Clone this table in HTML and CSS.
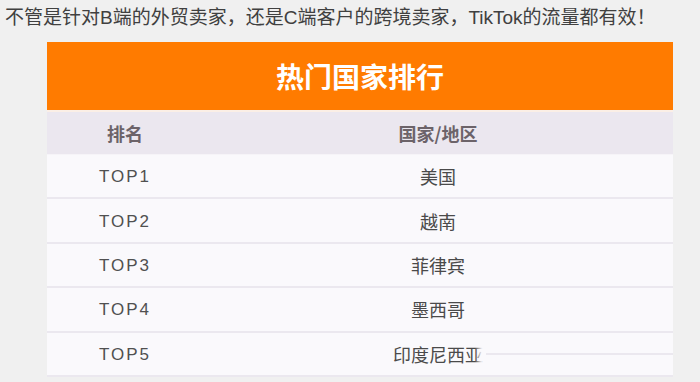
FILE: index.html
```html
<!DOCTYPE html>
<html lang="zh-CN">
<head>
<meta charset="utf-8">
<title>热门国家排行</title>
<link rel="stylesheet" href="styles.css">
</head>
<body>
<p class="intro">不管是针对B端的外贸卖家，还是C端客户的跨境卖家，TikTok的流量都有效！</p>
<div class="ranking">
  <div class="ranking-title">热门国家排行</div>
  <div class="row head"><div class="cell">排名</div><div class="cell">国家/地区</div></div>
  <div class="row"><div class="cell rank">TOP1</div><div class="cell">美国</div></div>
  <div class="row"><div class="cell rank">TOP2</div><div class="cell">越南</div></div>
  <div class="row"><div class="cell rank">TOP3</div><div class="cell">菲律宾</div></div>
  <div class="row"><div class="cell rank">TOP4</div><div class="cell">墨西哥</div></div>
  <div class="row last"><div class="cell rank">TOP5</div><div class="cell">印度尼西亚</div><span class="smudge"></span><span class="streak"></span></div>
</div>
</body>
</html>
```
FILE: styles.css
```css
html, body {
  margin: 0;
  padding: 0;
  background: #f0f0f0;
}
body {
  font-family: "Liberation Sans", "Noto Sans CJK SC", sans-serif;
  width: 700px;
  height: 382px;
  overflow: hidden;
}
.intro {
  margin: 0;
  padding: 6px 0 0 5px;
  height: 42px;
  box-sizing: border-box;
  font-size: 19px;
  line-height: 24px;
  color: #404040;
  white-space: nowrap;
}
.ranking {
  margin-left: 47px;
  width: 626px;
}
.ranking-title {
  height: 68px;
  background: #ff7b00;
  color: #ffffff;
  font-family: "Noto Sans CJK SC", sans-serif;
  font-weight: 700;
  font-size: 28px;
  display: flex;
  align-items: center;
  justify-content: center;
  border-bottom: 2px solid #fbefe6;
}
.row {
  position: relative;
  display: grid;
  grid-template-columns: 156px 1fr;
  height: 42.4px;
  background: #faf9fc;
  border-bottom: 2px solid #ebe8ef;
  color: #4a4a4a;
}
.row.head {
  height: 42px;
  background: #ebe7ef;
  border-bottom: 1px solid #f6f4f8;
  color: #6c6369;
  font-weight: 700;
}
.cell {
  display: flex;
  align-items: center;
  justify-content: center;
  font-family: "Noto Sans CJK SC", sans-serif;
  font-size: 18px;
}
.cell.rank {
  font-family: "Liberation Sans", sans-serif;
  font-size: 17px;
  letter-spacing: 2px;
  color: #505050;
  padding-top: 2px;
}
.smudge {
  position: absolute;
  left: 428px;
  top: 8px;
  width: 14px;
  height: 26px;
  background: linear-gradient(90deg, rgba(250,249,252,0) 0%, rgba(250,249,252,0.9) 45%, rgba(250,249,252,0.3) 100%);
}
.streak {
  position: absolute;
  left: 439px;
  right: 0;
  top: 20px;
  height: 2px;
  background: #ebe8ef;
}
```
